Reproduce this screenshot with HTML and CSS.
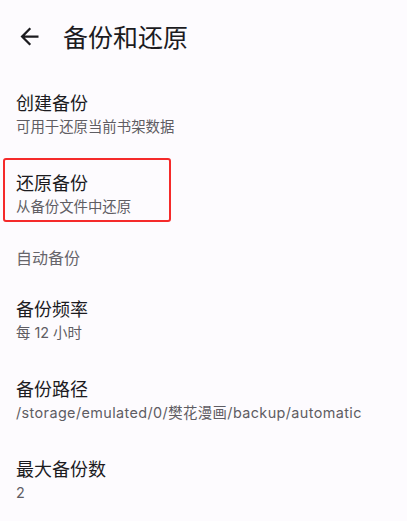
FILE: index.html
```html
<!DOCTYPE html>
<html>
<head>
	<meta charset="utf-8">
	<title>备份和还原</title>
	<link rel="stylesheet" href="styles.css">
</head>
<body>
	<div class="toolbar">
		<svg class="back" viewBox="0 0 24 24"><path d="M20 11H7.83l5.59-5.59L12 4l-8 8 8 8 1.41-1.41L7.83 13H20v-2z"/></svg>
		<h1>备份和还原</h1>
	</div>
	<div class="list">
		<div class="pref">
			<div class="title">创建备份</div>
			<div class="summary">可用于还原当前书架数据</div>
		</div>
		<div class="pref marked">
			<div class="title">还原备份</div>
			<div class="summary">从备份文件中还原</div>
			<div class="mark"></div>
		</div>
		<div class="category">自动备份</div>
		<div class="pref">
			<div class="title">备份频率</div>
			<div class="summary">每 12 小时</div>
		</div>
		<div class="pref">
			<div class="title">备份路径</div>
			<div class="summary path">/storage/emulated/0/樊花漫画/backup/automatic</div>
		</div>
		<div class="pref">
			<div class="title">最大备份数</div>
			<div class="summary">2</div>
		</div>
	</div>
</body>
</html>
```
FILE: styles.css
```css
*{
	box-sizing: border-box;
}
body{
	margin: 0;
	background: #fdfbfe;
	color: #1c1b1f;
	font-family: Roboto, "Noto Sans CJK SC", sans-serif;
	overflow: hidden;
}
.toolbar{
	display: flex;
	align-items: center;
	height: 72px;
	padding: 0 16px;
	gap: 20px;
}
.back{
	width: 27px;
	height: 27px;
	fill: #1c1b1f;
}
.toolbar h1{
	margin: 0;
	font-size: 25px;
	font-weight: 400;
}
.list{
	padding-top: 3px;
}
.pref{
	position: relative;
	padding: 17px 16px;
	height: 80px;
}
.title{
	font-size: 18px;
	line-height: 24px;
}
.summary{
	font-family: Inter, "Noto Sans CJK SC", sans-serif;
	font-size: 14.4px;
	line-height: 22px;
	color: #5f5d63;
	white-space: nowrap;
}
.path{
	letter-spacing: 0.4px;
}
.category{
	padding: 14px 16px 12px;
	font-size: 16px;
	line-height: 20px;
	color: #67656b;
}
.mark{
	position: absolute;
	left: 3px;
	top: 3px;
	width: 168px;
	height: 64px;
	border: 2px solid #f52a2a;
	border-radius: 3px;
}
```
